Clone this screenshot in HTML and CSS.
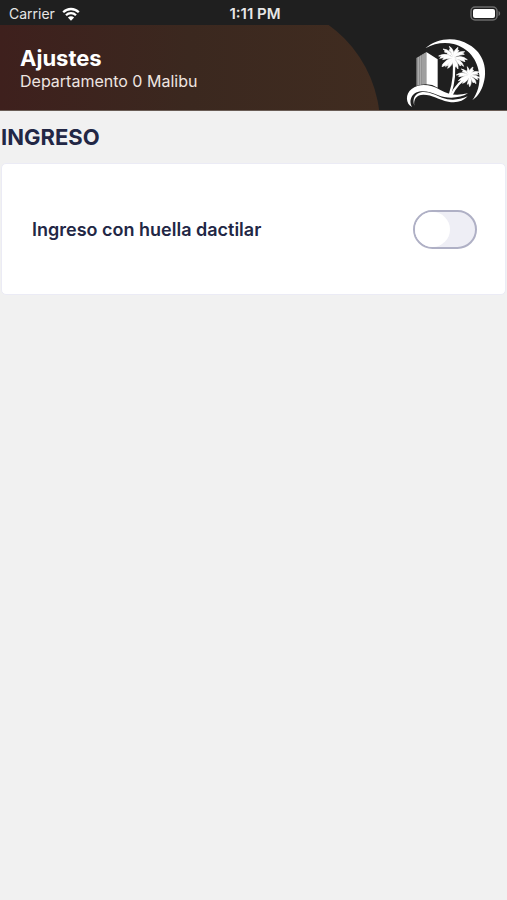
FILE: index.html
```html
<!DOCTYPE html>
<html lang="es">
<head>
<meta charset="utf-8">
<meta name="viewport" content="width=device-width, initial-scale=1">
<title>Ajustes</title>
<link rel="stylesheet" href="styles.css">
</head>
<body>
<div class="status">
  <div class="status-left">
    <span>Carrier</span>
    <svg class="wifi" viewBox="0 0 18 14" aria-hidden="true">
      <path d="M1.2 5.2C5.6.9 12.4.9 16.8 5.2M4 8.2c2.8-2.8 7.2-2.8 10 0" fill="none" stroke="#fff" stroke-width="2.3"/>
      <path d="M9 13.8 5.900 10.600c1.700-1.700 4.500-1.700 6.200 0z" fill="#fff"/>
    </svg>
  </div>
  <span class="time">1:11 PM</span>
  <svg class="battery" viewBox="0 0 31 15" aria-hidden="true">
    <rect x="1" y="1" width="26" height="13" rx="4" fill="none" stroke="#6b6b6b" stroke-width="1.500"/>
    <rect x="3" y="3" width="22" height="9" rx="2" fill="#fff"/>
    <path d="M28.500 5v5c2.200-1 2.200-4 0-5z" fill="#6b6b6b"/>
  </svg>
</div>
<header class="header">
  <div class="heading">
    <h1>Ajustes</h1>
    <p>Departamento 0 Malibu</p>
  </div>
  <svg class="logo" viewBox="0 0 276 240" role="img" aria-label="Malibu">
    <path d="M76 43C112 12 165 7 207 32C251 56 266 108 248 157C241 176 232 188 217 199C233 177 240 151 238 124C234 76 204 41 161 30C132 23 103 28 76 43Z" fill="#fff"/>
    <path d="M49 72 79 54V151Q63 151 49 156Z" fill="#8c8c8c"/>
    <path d="M55 69V153M62 65V152M69 61V151M75 57V150" stroke="#c4c4c4" stroke-width="2"/>
    <path d="M79 54 113 76V161Q97 151 79 151Z" fill="#fff"/>
    <g fill="none" stroke="#fff" stroke-linecap="round">
      <path d="M160 73C165 107 162 145 150 181" stroke-width="7"/>
      <path d="M207 127C184 139 166 158 154 184" stroke-width="7"/>
    </g>
    <g fill="#fff" stroke="#fff" stroke-width="2" stroke-linejoin="round">
      <path d="M160 73Q139 53 116 66L125 67 119 73 132 71 128 77Q144 71 160 73Z"/>
      <path d="M160 73Q154 47 129 45L136 51 133 54 143 57 142 61Q152 63 160 73Z"/>
      <path d="M160 73Q165 47 148 37L151 46 147 48 153 55Q157 62 160 73Z"/>
      <path d="M160 73Q157 51 174 40L172 49 177 49 170 59Q165 63 160 73Z"/>
      <path d="M160 73Q168 50 194 53L187 57 193 61 180 63Q169 65 160 73Z"/>
      <path d="M160 73Q184 61 202 77L192 76 195 83 182 79Q171 75 160 73Z"/>
      <path d="M160 73Q185 76 191 97L182 91 181 96 173 86Q168 77 160 73Z"/>
      <path d="M160 73Q176 85 174 105L168 97 165 100 163 88Z"/>
      <path d="M160 73Q160 94 143 103L146 94 142 95 149 85Z"/>
      <path d="M160 73Q144 71 128 91L126 98 137 94 137 98Q151 86 160 73Z"/>
      <path d="M208 125Q187 109 169 123L179 122 176 128 190 126Q200 124 208 125Z"/>
      <path d="M208 125Q199 106 184 105L190 110 187 113 198 118Z"/>
      <path d="M208 125Q211 107 202 98L203 108 200 110Z"/>
      <path d="M208 125Q203 108 219 99L217 108 221 109Z"/>
      <path d="M208 125Q217 108 238 114L230 118 235 121Q220 119 208 125Z"/>
      <path d="M208 125Q226 119 241 133L231 131 233 137Q220 128 208 125Z"/>
      <path d="M208 125Q228 132 228 149L221 143 220 147Z"/>
      <path d="M208 125Q219 142 209 158L206 148 202 151Z"/>
      <path d="M208 125Q202 145 187 148L191 142 186 141Z"/>
      <path d="M208 125Q190 123 175 140L184 138 185 141Z"/>
    </g>
    <path d="M36 219C17 210 15 180 35 165C58 147 92 151 121 168C146 182 168 186 204 178C180 193 143 196 113 183C79 166 46 168 36 187C29 199 31 210 36 219Z" fill="#fff"/>
    <path d="M43 215C36 196 44 179 63 175C85 171 105 183 126 191C150 200 176 199 203 187C190 202 168 208 145 203C115 197 98 182 70 182C50 182 40 195 43 215Z" fill="#fff"/>
  </svg>
</header>
<main>
  <h2>INGRESO</h2>
  <section class="card">
    <label for="fingerprint">Ingreso con huella dactilar</label>
    <input class="switch" id="fingerprint" type="checkbox" role="switch">
  </section>
</main>
</body>
</html>
```
FILE: styles.css
```css
* {
  box-sizing: border-box;
}

body {
  margin: 0;
  min-height: 100vh;
  background: #f1f1f1;
  color: #222745;
  font-family: Inter, "Liberation Sans", sans-serif;
}

h1, h2, p {
  margin: 0;
}

.status {
  display: grid;
  grid-template-columns: 1fr auto 1fr;
  align-items: center;
  height: 25px;
  padding: 2px 6px 0 9px;
  background: #1f1f1f;
  color: #e6e6e6;
  font-size: 14px;
  line-height: 20px;
}

.status-left {
  display: flex;
  align-items: center;
  gap: 7px;
}

.wifi {
  width: 18px;
  height: 14px;
}

.time {
  font-size: 15px;
  font-weight: 600;
}

.battery {
  justify-self: end;
  width: 31px;
  height: 15px;
}

.header {
  position: relative;
  display: flex;
  justify-content: space-between;
  align-items: flex-end;
  height: 86px;
  padding: 0 15px 0 20px;
  overflow: hidden;
  border-bottom: 1px solid #695c55;
  background: #1f1f1f;
  color: #fff;
}

.header::before {
  content: "";
  position: absolute;
  top: -23px;
  left: 0;
  width: 75%;
  height: 246px;
  border-radius: 0 123px 123px 0;
  background: linear-gradient(90deg, #3e201d, #3b281f 50%, #402c20);
}

.heading {
  position: relative;
  align-self: center;
}

h1 {
  font-size: 22px;
  line-height: 26px;
}

.heading p {
  color: #eee5e1;
  font-size: 16px;
  line-height: 20px;
}

.logo {
  width: 92px;
  height: 80px;
  margin-bottom: -4px;
}

h2 {
  padding: 12px 1px;
  font-size: 22px;
  line-height: 28px;
}

.card {
  display: flex;
  justify-content: space-between;
  align-items: center;
  margin: 0 1px;
  padding: 46px 28px 45px 30px;
  border: 1px solid #ebebf5;
  border-radius: 5px;
  background: #fff;
  font-size: 18px;
  font-weight: 600;
  line-height: 24px;
}

.switch {
  appearance: none;
  display: flex;
  width: 64px;
  height: 39px;
  margin: 0;
  border: 2px solid #afb0c5;
  border-radius: 20px;
  background: #eeeef5;
  cursor: pointer;
}

.switch::before {
  content: "";
  width: 35px;
  height: 35px;
  border-radius: 50%;
  background: #fff;
}

.switch:checked {
  justify-content: flex-end;
  background: #222745;
}
```
